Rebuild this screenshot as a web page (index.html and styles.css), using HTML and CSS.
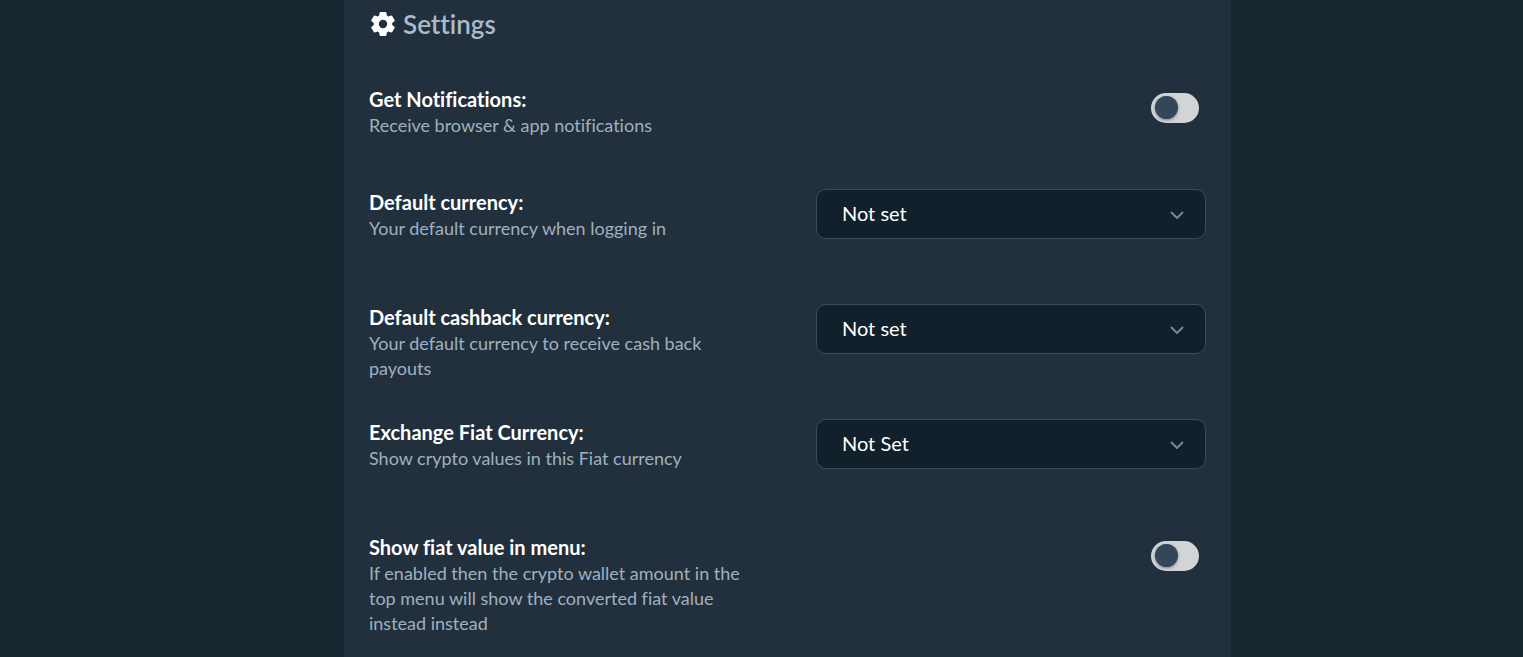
FILE: index.html
```html
<!DOCTYPE html>
<html lang="en">
<head>
    <meta charset="UTF-8">
    <meta name="viewport" content="width=device-width, initial-scale=1">
    <title>Settings</title>
    <link rel="stylesheet" href="styles.css">
</head>
<body>
    <main class="panel">
        <h1 class="title">
            <svg class="title_icon" viewBox="0 0 24 24" aria-hidden="true">
                <path fill-rule="evenodd" d="M8.6 0.8 Q8.8 0 9.6 0 H14.4 Q15.2 0 15.4 0.8 L15.9 3.6 L17.4 4.5 L20.1 3.5 Q20.8 3.2 21.2 3.9 L23.6 8 Q24 8.7 23.4 9.2 L21.2 11.1 V12.9 L23.4 14.8 Q24 15.3 23.6 16 L21.2 20.1 Q20.8 20.8 20.1 20.5 L17.4 19.5 L15.9 20.4 L15.4 23.2 Q15.2 24 14.4 24 H9.6 Q8.8 24 8.6 23.2 L8.1 20.4 L6.6 19.5 L3.9 20.5 Q3.2 20.8 2.8 20.1 L0.4 16 Q0 15.3 0.6 14.8 L2.8 12.9 V11.1 L0.6 9.2 Q0 8.7 0.4 8 L2.8 3.9 Q3.2 3.2 3.9 3.5 L6.6 4.5 L8.1 3.6 Z M12 7.8 A4.2 4.2 0 1 0 12 16.2 A4.2 4.2 0 1 0 12 7.8 Z"/>
            </svg>
            Settings
        </h1>
        <form class="settings">
            <div class="row row_first">
                <div class="info">
                    <label class="name" for="notifications">Get Notifications:</label>
                    <p class="desc">Receive browser &amp; app notifications</p>
                </div>
                <input class="toggle" type="checkbox" id="notifications">
            </div>
            <div class="row">
                <div class="info">
                    <label class="name" for="currency">Default currency:</label>
                    <p class="desc">Your default currency when logging in</p>
                </div>
                <div class="select_con">
                    <select class="select" id="currency">
                        <option>Not set</option>
                    </select>
                    <svg class="arrow" viewBox="0 0 14 8" aria-hidden="true"><path d="M1 1l6 6 6-6"/></svg>
                </div>
            </div>
            <div class="row">
                <div class="info">
                    <label class="name" for="cashback">Default cashback currency:</label>
                    <p class="desc">Your default currency to receive cash back payouts</p>
                </div>
                <div class="select_con">
                    <select class="select" id="cashback">
                        <option>Not set</option>
                    </select>
                    <svg class="arrow" viewBox="0 0 14 8" aria-hidden="true"><path d="M1 1l6 6 6-6"/></svg>
                </div>
            </div>
            <div class="row">
                <div class="info">
                    <label class="name" for="fiat">Exchange Fiat Currency:</label>
                    <p class="desc">Show crypto values in this Fiat currency</p>
                </div>
                <div class="select_con">
                    <select class="select" id="fiat">
                        <option>Not Set</option>
                    </select>
                    <svg class="arrow" viewBox="0 0 14 8" aria-hidden="true"><path d="M1 1l6 6 6-6"/></svg>
                </div>
            </div>
            <div class="row">
                <div class="info">
                    <label class="name" for="menu_value">Show fiat value in menu:</label>
                    <p class="desc">If enabled then the crypto wallet amount in the top menu will show the converted fiat value instead instead</p>
                </div>
                <input class="toggle" type="checkbox" id="menu_value">
            </div>
        </form>
    </main>
</body>
</html>
```
FILE: styles.css
```css
*{
    box-sizing: border-box;
}
body{
    margin: 0;
    padding-left: 52px;
    background-color: #15262f;
    color: #fff;
    font-family: Lato, "Liberation Sans", sans-serif;
    font-variant-ligatures: none;
}
.panel{
    max-width: 887px;
    min-height: 100vh;
    margin: 0 auto;
    padding: 8px 25px 0;
    background-color: #21303c;
}
.title{
    display: flex;
    align-items: center;
    gap: 8px;
    height: 32px;
    margin: 0 0 46px;
    padding-left: 2px;
    color: #a9bbcc;
    font-size: 26px;
    font-weight: 600;
}
.title_icon{
    width: 24px;
    height: 24px;
    fill: #fff;
}
.row{
    display: flex;
    justify-content: space-between;
    align-items: flex-start;
    min-height: 115px;
}
.row_first{
    min-height: 103px;
}
.info{
    width: 47%;
}
.name{
    display: block;
    font-size: 20px;
    font-weight: 700;
    line-height: 27px;
}
.desc{
    margin: 0;
    color: #a0b0c0;
    font-size: 18px;
    line-height: 25px;
}
/* switch */
.toggle{
    appearance: none;
    flex: none;
    display: flex;
    width: 48px;
    height: 30px;
    margin: 7px 7px 0 0;
    padding: 3px 4px;
    border-radius: 15px;
    background-color: #d1d5d8;
    cursor: pointer;
}
.toggle::before{
    content: "";
    width: 23px;
    height: 23px;
    border-radius: 50%;
    background-color: #33465a;
    box-shadow: 0 1px 3px rgba(0,0,0,0.4);
    transition: transform 200ms ease;
}
.toggle:checked::before{
    transform: translateX(17px);
}
/* drop-down */
.select_con{
    position: relative;
    width: 390px;
}
.select{
    appearance: none;
    display: block;
    width: 100%;
    height: 50px;
    padding: 0 50px 2px 25px;
    border: 1px solid #3a4b60;
    border-radius: 10px;
    background-color: #11202a;
    color: #fff;
    font-family: inherit;
    font-size: 20px;
}
.arrow{
    position: absolute;
    top: 22px;
    right: 22px;
    width: 14px;
    height: 8px;
    fill: none;
    stroke: #76879a;
    stroke-width: 2;
    pointer-events: none;
}
```
